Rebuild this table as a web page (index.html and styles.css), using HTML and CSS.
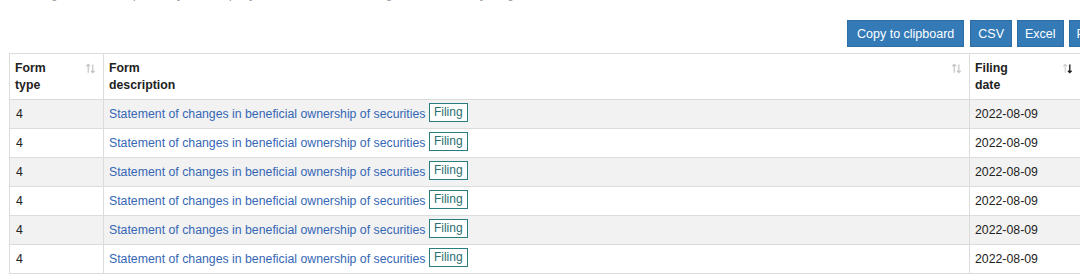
FILE: index.html
```html
<!DOCTYPE html>
<html>
<head>
<meta charset="utf-8">
<link rel="stylesheet" href="styles.css">
</head>
<body>
<div class="page">
  <p class="intro">The filings below are reported by the company and its insiders to the regulator, ordered by filing date.</p>
  <div class="toolbar">
    <button class="btn">Copy to clipboard</button>
    <button class="btn">CSV</button>
    <button class="btn">Excel</button>
    <button class="btn">PDF</button>
    <button class="btn">Print</button>
  </div>
  <table class="grid">
    <thead>
      <tr>
        <th class="c1"><div class="th-in"><span>Form<br>type</span><svg class="sort" viewBox="0 0 12 12"><path d="M3.5 10.5V1.5M1.5 3.5l2-2 2 2" fill="none" stroke="#c4c4c4" stroke-width="1.3"/><path d="M8.5 1.5v9M6.5 8.5l2 2 2-2" fill="none" stroke="#c4c4c4" stroke-width="1.3"/></svg></div></th>
        <th class="c2"><div class="th-in"><span>Form<br>description</span><svg class="sort" viewBox="0 0 12 12"><path d="M3.5 10.5V1.5M1.5 3.5l2-2 2 2" fill="none" stroke="#c4c4c4" stroke-width="1.3"/><path d="M8.5 1.5v9M6.5 8.5l2 2 2-2" fill="none" stroke="#c4c4c4" stroke-width="1.3"/></svg></div></th>
        <th class="c3"><div class="th-in"><span>Filing<br>date</span><svg class="sort" viewBox="0 0 12 12"><path d="M3.5 10.5V1.5M1.5 3.5l2-2 2 2" fill="none" stroke="#d0d0d0" stroke-width="1.3"/><path d="M8.5 1.5v9M6.5 8.5l2 2 2-2" fill="none" stroke="#222" stroke-width="1.5"/></svg></div></th>
      </tr>
    </thead>
    <tbody>
      <tr class="odd"><td>4</td><td><a class="lnk">Statement of changes in beneficial ownership of securities</a> <span class="tag">Filing</span></td><td>2022-08-09</td></tr>
      <tr><td>4</td><td><a class="lnk">Statement of changes in beneficial ownership of securities</a> <span class="tag">Filing</span></td><td>2022-08-09</td></tr>
      <tr class="odd"><td>4</td><td><a class="lnk">Statement of changes in beneficial ownership of securities</a> <span class="tag">Filing</span></td><td>2022-08-09</td></tr>
      <tr><td>4</td><td><a class="lnk">Statement of changes in beneficial ownership of securities</a> <span class="tag">Filing</span></td><td>2022-08-09</td></tr>
      <tr class="odd"><td>4</td><td><a class="lnk">Statement of changes in beneficial ownership of securities</a> <span class="tag">Filing</span></td><td>2022-08-09</td></tr>
      <tr><td>4</td><td><a class="lnk">Statement of changes in beneficial ownership of securities</a> <span class="tag">Filing</span></td><td>2022-08-09</td></tr>
    </tbody>
  </table>
</div>
</body>
</html>
```
FILE: styles.css
```css
html, body {
  margin: 0;
  padding: 0;
  background: #fff;
  overflow: hidden;
}
body {
  font-family: "Liberation Sans", Arial, sans-serif;
  font-size: 12.3px;
  color: #222;
}
.page {
  width: 1140px;
  padding-left: 9px;
}
.intro {
  margin: -13px 0 0 0;
  height: 14px;
  line-height: 14px;
  color: #999;
  font-size: 12px;
}
.toolbar {
  display: flex;
  gap: 5px;
  padding-left: 838px;
  margin-top: 19px;
  margin-bottom: 6px;
}
.btn {
  background: #337ab7;
  color: #fff;
  border: 1px solid #2e6da4;
  font-family: "Liberation Sans", Arial, sans-serif;
  font-size: 12.5px;
  height: 27px;
  padding: 0 7px;
  border-radius: 0;
  white-space: nowrap;
}
.btn:first-child { padding: 0 9px; margin-right: 1px; }
.grid {
  border-collapse: collapse;
  width: 1120px;
  table-layout: fixed;
  border-top: 1px solid #dcdcdc;
}
.grid th, .grid td {
  border: 1px solid #dcdcdc;
  text-align: left;
  vertical-align: middle;
}
.grid th {
  font-weight: bold;
  line-height: 17px;
  padding: 6px 5px 5px 5px;
  height: 34px;
}
.grid .c1 { width: 83px; }
.grid .c2 { width: 855px; }
.th-in {
  display: flex;
  justify-content: space-between;
  align-items: flex-start;
}
.c3 .th-in { width: 100px; }
.sort {
  width: 11px;
  height: 11px;
  margin-top: 3px;
  margin-right: 2px;
  flex: none;
}
.grid td {
  height: 28px;
  padding: 0 5px;
  line-height: 17px;
}
.grid td:first-child { padding-left: 6px; }
.grid tr.odd td { background: #f2f2f2; }
.lnk {
  color: #3567b5;
  text-decoration: none;
}
.tag {
  display: inline-block;
  border: 1px solid #2a7d7d;
  color: #2a7070;
  background: #fff;
  font-size: 12px;
  line-height: 15px;
  padding: 1px 4px;
  margin-left: 0;
  position: relative;
  top: -2px;
}
```
